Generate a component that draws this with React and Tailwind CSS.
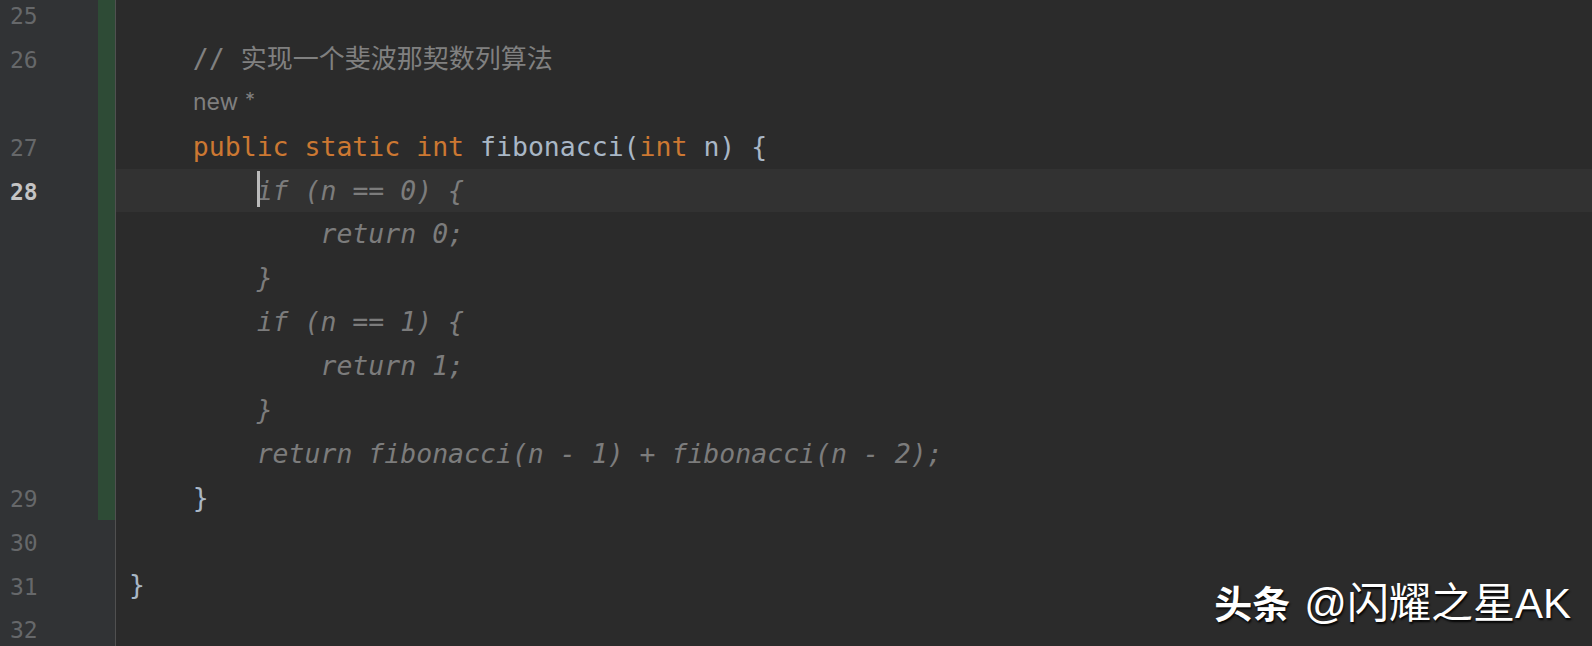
import React from 'react';

const mono = { fontFamily: '"DejaVu Sans Mono", "Noto Sans CJK SC", monospace' };

// Darcula-ish palette
const KW = 'text-[#cc7832]';
const ID = 'text-[#a9b7c6]';
const GHOST = 'text-[#7c7c7c] italic';

function Ghost({ indent, children }) {
  return <span className={GHOST}>{' '.repeat(indent)}{children}</span>;
}

const rows = [
  { num: '25', green: true },
  {
    num: '26',
    green: true,
    content: (
      <span className="text-[#808080]">{'    // '}<span className="text-[26px]">实现一个斐波那契数列算法</span></span>
    ),
  },
  {
    num: '',
    green: true,
    content: (
      <span className="pl-[64px] text-[23px] text-[#7f7f7f] font-['Inter',sans-serif]">
        new <span className="relative -top-[3px] text-[20px]">*</span>
      </span>
    ),
  },
  {
    num: '27',
    green: true,
    content: (
      <span>
        {'    '}
        <span className={KW}>public static int </span>
        <span className={ID}>fibonacci(</span>
        <span className={KW}>int </span>
        <span className={ID}>n) {'{'}</span>
      </span>
    ),
  },
  {
    num: '28',
    green: true,
    current: true,
    content: (
      <span className={GHOST}>
        {'        '}
        <span className="relative">
          <span className="absolute left-[0px] top-[-4px] h-[36px] w-[3px] bg-[#bbbbbb]" />
          if
        </span>
        {' (n == 0) {'}
      </span>
    ),
  },
  { num: '', green: true, content: <Ghost indent={12}>return 0;</Ghost> },
  { num: '', green: true, content: <Ghost indent={8}>{'}'}</Ghost> },
  { num: '', green: true, content: <Ghost indent={8}>{'if (n == 1) {'}</Ghost> },
  { num: '', green: true, content: <Ghost indent={12}>return 1;</Ghost> },
  { num: '', green: true, content: <Ghost indent={8}>{'}'}</Ghost> },
  {
    num: '',
    green: true,
    content: <Ghost indent={8}>return fibonacci(n - 1) + fibonacci(n - 2);</Ghost>,
  },
  { num: '29', green: true, content: <span className={ID}>{'    }'}</span> },
  { num: '30' },
  { num: '31', content: <span className={ID}>{'}'}</span> },
  { num: '32' },
];

export default function App() {
  return (
    <div className="relative h-[646px] w-full overflow-hidden bg-[#2b2b2b]">
      <div className="-mt-[7px] flex flex-col" style={mono}>
        {rows.map((r, i) => (
          <div key={i} className="flex h-[43.88px] items-center">
            {/* gutter: line number + change marker */}
            <div
              className={`flex h-full w-[98px] items-center bg-[#313335] pl-[10px] pt-[3px] text-[23px] ${
                r.current ? 'font-bold text-[#c4c4c4]' : 'text-[#66686a]'
              }`}
            >
              {r.num}
            </div>
            <div className={`h-full w-[17px] ${r.green ? 'bg-[#2e4b36]' : 'bg-[#313335]'}`} />
            <div className="h-full w-px bg-[#505050]" />
            {/* code */}
            <div
              className={`flex h-full flex-1 items-center whitespace-pre pl-[13px] text-[26.5px] ${
                r.current ? 'bg-[#323232]' : ''
              }`}
            >
              {r.content}
            </div>
          </div>
        ))}
      </div>

      {/* watermark */}
      <div
        className="absolute bottom-[11px] right-[21px] flex items-baseline text-white [text-shadow:1px_2px_2px_rgba(0,0,0,0.9)]"
        style={{ fontFamily: '"Liberation Sans", "Noto Sans CJK SC", sans-serif' }}
      >
        <span className="text-[38px] font-bold">头条</span>
        <span className="ml-[14px] text-[42px]">@闪耀之星AK</span>
      </div>
    </div>
  );
}
